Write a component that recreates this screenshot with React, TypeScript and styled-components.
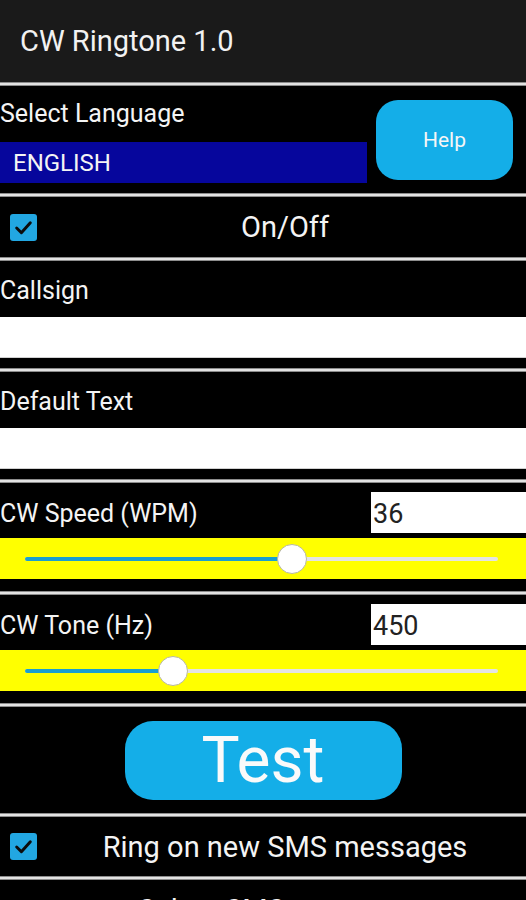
import React from 'react';
import styled, { createGlobalStyle } from 'styled-components';

const GlobalStyle = createGlobalStyle`
  html, body {
    margin: 0;
    padding: 0;
    background: #000;
  }
  body {
    font-family: Roboto, "Liberation Sans", sans-serif;
    color: #f4f4f4;
    overflow: hidden;
  }
`;

const Screen = styled.div`
  width: 526px;
  height: 900px;
  background: #000;
  display: flex;
  flex-direction: column;
  overflow: hidden;
`;

const TitleBar = styled.header`
  height: 82px;
  flex: none;
  background: #1a1a1a;
  display: flex;
  align-items: center;
  padding-left: 20px;
  font-size: 29px;
  color: #f2f2f2;
`;

const Divider = styled.div`
  height: 4px;
  flex: none;
  background: linear-gradient(#8c8c8c 0 1px, #e2e2e2 1px 3px, #8c8c8c 3px 4px);
`;

const Label = styled.div`
  font-size: 25px;
  line-height: 28px;
  color: #f4f4f4;
  white-space: nowrap;
`;

/* ---------- language ---------- */

const LanguageSection = styled.section`
  height: 107px;
  flex: none;
  display: grid;
  grid-template-columns: 367px 137px;
  column-gap: 9px;
  align-items: center;
`;

const LanguageColumn = styled.div`
  display: flex;
  flex-direction: column;
  gap: 14px;
  padding-top: 4px;
`;

const LanguageSelect = styled.div`
  height: 41px;
  line-height: 42px;
  background: #06069c;
  color: #f4f4f4;
  font-size: 24px;
  padding-left: 13px;
`;

const HelpButton = styled.button`
  height: 80px;
  border: none;
  border-radius: 22px;
  background: #14aee8;
  color: #f6f6f6;
  font-family: Roboto, "Liberation Sans", sans-serif;
  font-size: 21px;
  padding: 0;
`;

/* ---------- checkbox rows ---------- */

const CheckRow = styled.section<{ $height: number }>`
  height: ${(p) => p.$height}px;
  flex: none;
  display: flex;
  align-items: center;
  padding-left: 10px;
`;

const CheckBox = styled.span`
  width: 27px;
  height: 27px;
  flex: none;
  border-radius: 3px;
  background: #22a7e2;
  display: flex;
  align-items: center;
  justify-content: center;
`;

const CheckText = styled.span`
  flex: 1;
  margin-left: 7px;
  text-align: center;
  font-size: 29px;
  color: #f4f4f4;
  white-space: nowrap;
`;

const Check = () => (
  <CheckBox>
    <svg width="21" height="21" viewBox="0 0 20 20">
      <path d="M3.5 10.5 L8 15 L16.5 5.5" fill="none" stroke="#0c0c0c" strokeWidth="2.8" strokeLinecap="round" strokeLinejoin="round" />
    </svg>
  </CheckBox>
);

/* ---------- text fields ---------- */

const FieldSection = styled.section`
  height: 107px;
  flex: none;
  display: flex;
  flex-direction: column;
  gap: 12px;
  padding-top: 16px;
  box-sizing: border-box;
`;

const WhiteField = styled.div`
  height: 41px;
  background: #fff;
  border-bottom: 1px solid #d0d0d0;
  box-sizing: border-box;
`;

/* ---------- sliders ---------- */

const SliderSection = styled.section`
  height: 108px;
  flex: none;
  display: flex;
  flex-direction: column;
  gap: 5px;
  padding-top: 9px;
  box-sizing: border-box;
`;

const ValueRow = styled.div`
  height: 41px;
  display: grid;
  grid-template-columns: 1fr 155px;
  align-items: center;
`;

const ValueLabel = styled(Label)`
  padding-top: 3px;
`;

const ValueInput = styled.div`
  height: 41px;
  background: #fff;
  color: #222;
  font-size: 27px;
  line-height: 44px;
  padding-left: 2px;
`;

const SliderBand = styled.div`
  height: 41px;
  background: #ffff00;
  display: flex;
  align-items: center;
  padding: 0 28px 0 25px;
`;

const Track = styled.div`
  position: relative;
  flex: 1;
  height: 4px;
  border-radius: 2px;
  background: #e4e4e4;
`;

const TrackFill = styled.div`
  height: 100%;
  border-radius: 2px;
  background: #1a9fcf;
`;

const Thumb = styled.div`
  position: absolute;
  top: 50%;
  width: 28px;
  height: 28px;
  border-radius: 50%;
  background: #fff;
  border: 1px solid #b8b8a0;
  transform: translate(-50%, -50%);
`;

type SliderProps = { label: string; value: number; min: number; max: number };

const SliderBlock = ({ label, value, min, max }: SliderProps) => {
  const pct = ((value - min) / (max - min)) * 100;
  return (
    <SliderSection>
      <ValueRow>
        <ValueLabel>{label}</ValueLabel>
        <ValueInput>{value}</ValueInput>
      </ValueRow>
      <SliderBand>
        <Track>
          <TrackFill style={{ width: `${pct}%` }} />
          <Thumb style={{ left: `${pct}%` }} />
        </Track>
      </SliderBand>
    </SliderSection>
  );
};

/* ---------- test ---------- */

const TestSection = styled.section`
  height: 106px;
  flex: none;
  display: flex;
  align-items: center;
  justify-content: center;
`;

const TestButton = styled.button`
  width: 277px;
  height: 79px;
  border: none;
  border-radius: 28px;
  background: #14aee8;
  color: #fafafa;
  font-family: Roboto, "Liberation Sans", sans-serif;
  font-size: 64px;
  line-height: 79px;
  padding: 0;
`;

const App = () => (
  <Screen>
    <GlobalStyle />
    <TitleBar>CW Ringtone 1.0</TitleBar>
    <Divider />
    <LanguageSection>
      <LanguageColumn>
        <Label>Select Language</Label>
        <LanguageSelect>ENGLISH</LanguageSelect>
      </LanguageColumn>
      <HelpButton>Help</HelpButton>
    </LanguageSection>
    <Divider />
    <CheckRow $height={60}>
      <Check />
      <CheckText>On/Off</CheckText>
    </CheckRow>
    <Divider />
    <FieldSection>
      <Label>Callsign</Label>
      <WhiteField />
    </FieldSection>
    <Divider />
    <FieldSection>
      <Label>Default Text</Label>
      <WhiteField />
    </FieldSection>
    <Divider />
    <SliderBlock label="CW Speed (WPM)" value={36} min={5} max={60} />
    <Divider />
    <SliderBlock label="CW Tone (Hz)" value={450} min={200} max={1000} />
    <Divider />
    <TestSection>
      <TestButton>Test</TestButton>
    </TestSection>
    <Divider />
    <CheckRow $height={59}>
      <Check />
      <CheckText>Ring on new SMS messages</CheckText>
    </CheckRow>
    <Divider />
    <CheckRow $height={60}>
      <CheckText>Select SMS contacts</CheckText>
    </CheckRow>
  </Screen>
);

export default App;
